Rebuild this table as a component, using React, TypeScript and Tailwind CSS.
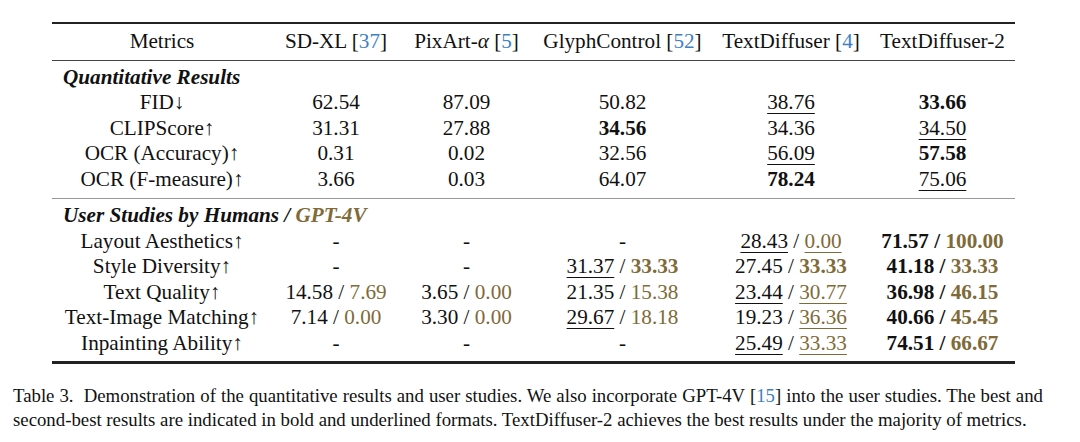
type Part = { t: string; b?: boolean; u?: boolean; g?: boolean };
type Cell = Part[];

const dash: Cell = [{ t: "-" }];

const cols = "grid grid-cols-[220px_128px_133px_179px_158px_145px]";

const quant: { label: string; cells: Cell[] }[] = [
  { label: "FID↓", cells: [[{ t: "62.54" }], [{ t: "87.09" }], [{ t: "50.82" }], [{ t: "38.76", u: true }], [{ t: "33.66", b: true }]] },
  { label: "CLIPScore↑", cells: [[{ t: "31.31" }], [{ t: "27.88" }], [{ t: "34.56", b: true }], [{ t: "34.36" }], [{ t: "34.50", u: true }]] },
  { label: "OCR (Accuracy)↑", cells: [[{ t: "0.31" }], [{ t: "0.02" }], [{ t: "32.56" }], [{ t: "56.09", u: true }], [{ t: "57.58", b: true }]] },
  { label: "OCR (F-measure)↑", cells: [[{ t: "3.66" }], [{ t: "0.03" }], [{ t: "64.07" }], [{ t: "78.24", b: true }], [{ t: "75.06", u: true }]] },
];

const pair = (a: Part, c: Part): Cell => [a, { t: " / ", b: a.b && c.b }, { ...c, g: true }];

const users: { label: string; cells: Cell[] }[] = [
  {
    label: "Layout Aesthetics↑",
    cells: [dash, dash, dash, pair({ t: "28.43", u: true }, { t: "0.00", u: true }), pair({ t: "71.57", b: true }, { t: "100.00", b: true })],
  },
  {
    label: "Style Diversity↑",
    cells: [dash, dash, pair({ t: "31.37", u: true }, { t: "33.33", b: true }), pair({ t: "27.45" }, { t: "33.33", b: true }), pair({ t: "41.18", b: true }, { t: "33.33", b: true })],
  },
  {
    label: "Text Quality↑",
    cells: [
      pair({ t: "14.58" }, { t: "7.69" }),
      pair({ t: "3.65" }, { t: "0.00" }),
      pair({ t: "21.35" }, { t: "15.38" }),
      pair({ t: "23.44", u: true }, { t: "30.77", u: true }),
      pair({ t: "36.98", b: true }, { t: "46.15", b: true }),
    ],
  },
  {
    label: "Text-Image Matching↑",
    cells: [
      pair({ t: "7.14" }, { t: "0.00" }),
      pair({ t: "3.30" }, { t: "0.00" }),
      pair({ t: "29.67", u: true }, { t: "18.18" }),
      pair({ t: "19.23" }, { t: "36.36", u: true }),
      pair({ t: "40.66", b: true }, { t: "45.45", b: true }),
    ],
  },
  {
    label: "Inpainting Ability↑",
    cells: [dash, dash, dash, pair({ t: "25.49", u: true }, { t: "33.33", u: true }), pair({ t: "74.51", b: true }, { t: "66.67", b: true })],
  },
];

function Val({ cell }: { cell: Cell }) {
  return (
    <span className="whitespace-pre">
      {cell.map((p, i) => (
        <span
          key={i}
          className={[
            p.b ? "font-bold" : "",
            p.u ? "underline decoration-1 underline-offset-[4px]" : "",
            p.g ? "text-[#806a38]" : "",
          ].join(" ")}
        >
          {p.t}
        </span>
      ))}
    </span>
  );
}

function Row({ label, cells }: { label: string; cells: Cell[] }) {
  return (
    <div className={`${cols} text-center`}>
      <div>{label}</div>
      {cells.map((c, i) => (
        <div key={i}>
          <Val cell={c} />
        </div>
      ))}
    </div>
  );
}

const Ref = ({ n }: { n: string }) => (
  <>
    [<span className="text-[#3d7fc4]">{n}</span>]
  </>
);

export default function App() {
  return (
    <div className="w-[1080px] h-[442px] bg-white text-[#111] font-['Liberation_Serif',serif] overflow-hidden">
      <div className="ml-[52px] mt-[22px] w-[963px] text-[21.2px] leading-[25.5px]">
        <div className="border-t-2 border-[#222]" />
        <div className={`${cols} text-center pt-[5px] pb-[5px]`}>
          <div>Metrics</div>
          <div>
            SD-XL <Ref n="37" />
          </div>
          <div>
            PixArt-<i>α</i> <Ref n="5" />
          </div>
          <div>
            GlyphControl <Ref n="52" />
          </div>
          <div>
            TextDiffuser <Ref n="4" />
          </div>
          <div>TextDiffuser-2</div>
        </div>
        <div className="border-t-[1.5px] border-[#444]" />
        <div className="pt-[4px] pb-[6px]">
          <div className="pl-[11px] font-bold italic">Quantitative Results</div>
          {quant.map((r) => (
            <Row key={r.label} {...r} />
          ))}
        </div>
        <div className="border-t border-[#999]" />
        <div className="pt-[4px] pb-[5px]">
          <div className="pl-[11px] font-bold italic">
            User Studies by Humans / <span className="text-[#806a38]">GPT-4V</span>
          </div>
          {users.map((r) => (
            <Row key={r.label} {...r} />
          ))}
        </div>
        <div className="border-t-[3px] border-[#222]" />
      </div>
      <div className="ml-[13px] mt-[20px] w-[1030px] text-[18.8px] leading-[24px]">
        <div className="text-justify [text-align-last:justify]">
          Table 3.&nbsp; Demonstration of the quantitative results and user studies. We also incorporate GPT-4V <Ref n="15" /> into the user studies. The best and
        </div>
        <div>
          second-best results are indicated in bold and underlined formats. TextDiffuser-2 achieves the best results under the majority of metrics.
        </div>
      </div>
    </div>
  );
}
